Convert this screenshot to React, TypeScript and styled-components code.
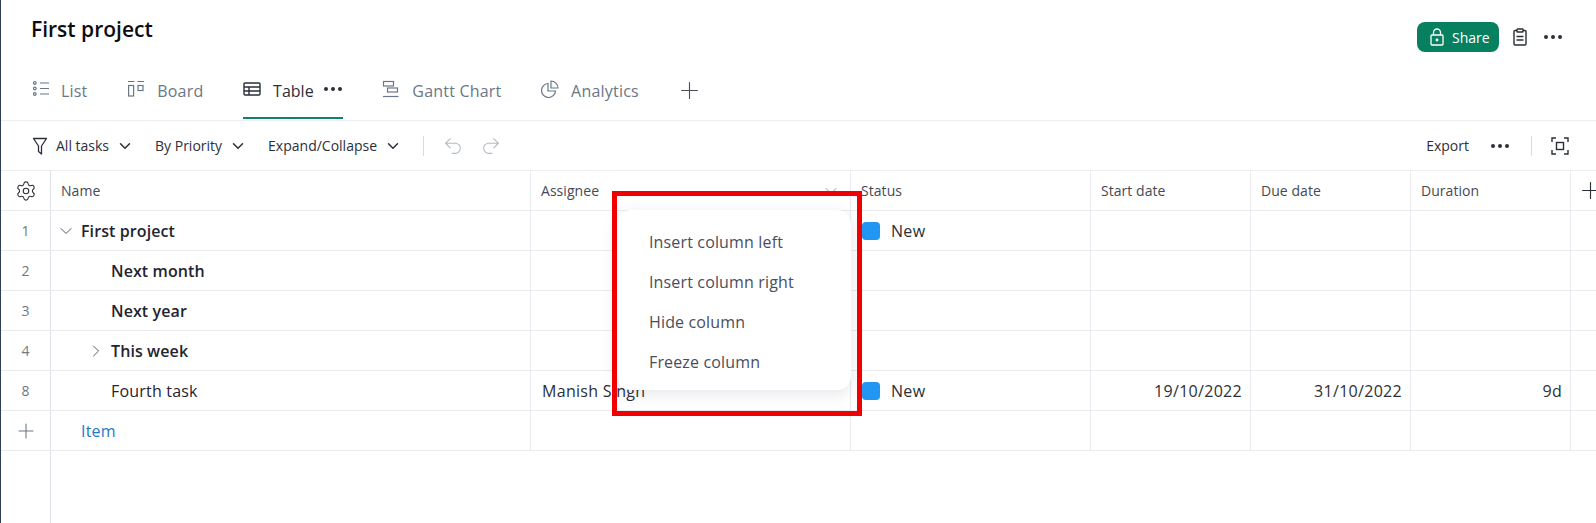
import React from 'react';
import styled, { createGlobalStyle } from 'styled-components';
import { ChevronDown, ChevronRight, Ellipsis, Plus, Redo2, Settings, Undo2 } from 'lucide-react';

const COLUMNS = '50px 480px 320px 240px 160px 160px 160px 25px';

const GlobalStyle = createGlobalStyle`
  html, body {
    margin: 0;
    padding: 0;
    background: #fff;
  }
  body {
    font-family: "Open Sans", "Noto Sans", "Liberation Sans", sans-serif;
    color: #2b2f3a;
  }
`;

const LockIcon = () => (
  <svg width="14" height="18" viewBox="0 0 14 18" fill="none" stroke="currentColor" strokeWidth="1.3">
    <rect x="1" y="7" width="12" height="10" rx="1" />
    <path d="M3.500 7V4.500a3.500 3.500 0 0 1 7 0V7" />
    <circle cx="7" cy="12" r="0.8" fill="currentColor" />
  </svg>
);

const ClipboardIcon = () => (
  <svg width="14" height="18" viewBox="0 0 14 18" fill="none" stroke="currentColor" strokeWidth="1.4">
    <path d="M4 2.500H2a1 1 0 0 0-1 1V16a1 1 0 0 0 1 1h10a1 1 0 0 0 1-1V3.500a1 1 0 0 0-1-1h-2" />
    <rect x="4" y="1" width="6" height="3" rx="0.5" />
    <path d="M3.500 8.500h7M3.500 12h7" />
  </svg>
);

const ListIcon = () => (
  <svg width="18" height="18" viewBox="0 0 18 18" fill="none" stroke="currentColor" strokeWidth="1.2">
    <circle cx="3.800" cy="3" r="1.300" />
    <circle cx="3.800" cy="8.500" r="1.300" />
    <circle cx="3.800" cy="14" r="1.300" />
    <path d="M9 3h9M9 8.500h9M9 14h9" />
  </svg>
);

const BoardIcon = () => (
  <svg width="18" height="18" viewBox="0 0 18 18" fill="none" stroke="currentColor" strokeWidth="1.2">
    <path d="M1 1.500h6.500M10.500 1.500h6.500" />
    <rect x="1.600" y="5.500" width="5" height="10.500" />
    <rect x="11" y="5.500" width="5" height="5" />
  </svg>
);

const TableIcon = () => (
  <svg width="18" height="18" viewBox="0 0 18 18" fill="none" stroke="currentColor" strokeWidth="1.4">
    <rect x="1" y="3" width="16" height="12" rx="1" />
    <path d="M1 7h16M1 11h16M6 7v8" />
  </svg>
);

const GanttIcon = () => (
  <svg width="18" height="18" viewBox="0 0 18 18" fill="none" stroke="currentColor" strokeWidth="1.2">
    <rect x="1.500" y="1.500" width="10" height="4.500" />
    <rect x="5.500" y="8" width="10" height="4" />
    <path d="M1 16.500h15.500" />
  </svg>
);

const AnalyticsIcon = () => (
  <svg width="18" height="18" viewBox="0 0 18 18" fill="none" stroke="currentColor" strokeWidth="1.2">
    <path d="M7 3.500a7 7 0 1 0 7.500 7.500H7z" />
    <path d="M10 1a7 7 0 0 1 7 7h-7z" />
  </svg>
);

const FunnelIcon = () => (
  <svg width="18" height="18" viewBox="0 0 18 18" fill="none" stroke="currentColor" strokeWidth="1.3" strokeLinejoin="round">
    <path d="M1.500 1.500h13l-5 7.500v8l-3-2.500V9z" />
  </svg>
);

const FocusIcon = () => (
  <svg width="18" height="18" viewBox="0 0 18 18" fill="none" stroke="currentColor" strokeWidth="1.4">
    <path d="M1 5V1h4M13 1h4v4M17 13v4h-4M5 17H1v-4" />
    <rect x="5.500" y="5.500" width="7" height="7" />
  </svg>
);

const rows = [
  { num: '1', name: 'First project', depth: 0, strong: true, toggle: 'down', status: true },
  { num: '2', name: 'Next month', depth: 1, strong: true },
  { num: '3', name: 'Next year', depth: 1, strong: true },
  { num: '4', name: 'This week', depth: 1, strong: true, toggle: 'right' },
  {
    num: '8',
    name: 'Fourth task',
    depth: 1,
    assignee: 'Manish Singh',
    status: true,
    start: '19/10/2022',
    due: '31/10/2022',
    duration: '9d',
  },
];

const menuItems = ['Insert column left', 'Insert column right', 'Hide column', 'Freeze column'];

export default function App() {
  return (
    <Page>
      <GlobalStyle />
      <TitleBar>
        <Title>First project</Title>
        <TitleActions>
          <ShareButton>
            <LockIcon />
            Share
          </ShareButton>
          <ClipboardIcon />
          <Ellipsis size={24} strokeWidth={2} />
        </TitleActions>
      </TitleBar>

      <Tabs>
        <Tab><ListIcon />List</Tab>
        <Tab><BoardIcon />Board</Tab>
        <Tab $active>
          <TableIcon />
          Table
          <TabMore size={24} strokeWidth={2} />
        </Tab>
        <Tab><GanttIcon />Gantt Chart</Tab>
        <Tab><AnalyticsIcon />Analytics</Tab>
        <AddTab><Plus size={27} strokeWidth={1} /></AddTab>
      </Tabs>

      <Toolbar>
        <ToolGroup $gap={21}>
          <ToolButton>
            <FunnelIcon />
            All tasks
            <ToolChevron size={18} strokeWidth={2} />
          </ToolButton>
          <ToolButton>
            By Priority
            <ToolChevron size={18} strokeWidth={2} />
          </ToolButton>
          <ToolButton>
            Expand/Collapse
            <ToolChevron size={18} strokeWidth={2} />
          </ToolButton>
          <Divider />
          <Muted>
            <Undo2 size={22} strokeWidth={1.2} />
            <Redo2 size={22} strokeWidth={1.2} />
          </Muted>
        </ToolGroup>
        <ToolGroup $gap={19}>
          <ToolButton>Export</ToolButton>
          <Ellipsis size={24} strokeWidth={2} />
          <Divider />
          <FocusIcon />
        </ToolGroup>
      </Toolbar>

      <Grid>
        <Row>
          <GutterCell><Settings size={22} strokeWidth={1.2} /></GutterCell>
          <HeaderCell>Name</HeaderCell>
          <HeaderCell>Assignee</HeaderCell>
          <HeaderCell>Status</HeaderCell>
          <HeaderCell>Start date</HeaderCell>
          <HeaderCell>Due date</HeaderCell>
          <HeaderCell>Duration</HeaderCell>
          <AddColumn><Plus size={27} strokeWidth={1} /></AddColumn>
        </Row>

        {rows.map((row) => (
          <Row key={row.num}>
            <GutterCell $muted>{row.num}</GutterCell>
            <NameCell $depth={row.depth} $strong={row.strong}>
              <Toggle>
                {row.toggle === 'down' && <ChevronDown size={20} strokeWidth={1.1} />}
                {row.toggle === 'right' && <ChevronRight size={20} strokeWidth={1.1} />}
              </Toggle>
              {row.name}
            </NameCell>
            <Cell>{row.assignee}</Cell>
            <Cell>
              {row.status && (
                <>
                  <StatusDot />
                  New
                </>
              )}
            </Cell>
            <DataCell>{row.start}</DataCell>
            <DataCell>{row.due}</DataCell>
            <DataCell>{row.duration}</DataCell>
          </Row>
        ))}

        <Row>
          <GutterCell $muted><Plus size={24} strokeWidth={1.1} /></GutterCell>
          <NameCell $depth={0} $link>
            <Toggle />
            Item
          </NameCell>
          <Cell />
          <Cell />
          <DataCell />
          <DataCell />
          <DataCell />
        </Row>
        <GutterFill />

        <HeaderCaret><ChevronDown size={20} strokeWidth={1.1} /></HeaderCaret>
        <Menu>
          {menuItems.map((item) => (
            <MenuItem key={item}>{item}</MenuItem>
          ))}
        </Menu>
        <Highlight />
      </Grid>
    </Page>
  );
}

// Styles
const Page = styled.div`
  display: flex;
  flex-direction: column;
  height: 523px;
  overflow: hidden;
  border-left: 1px solid #2e3e55;
  box-sizing: border-box;
`;

const TitleBar = styled.div`
  display: flex;
  justify-content: space-between;
  height: 70px;
  padding: 14px 31px 0 30px;
  box-sizing: border-box;
`;

const Title = styled.h1`
  margin: 0;
  font-size: 21px;
  line-height: 30px;
  font-weight: 600;
  color: #0c0d12;
`;

const TitleActions = styled.div`
  display: flex;
  align-items: center;
  gap: 14px;
  height: 30px;
  margin-top: 8px;
  color: #2b2f3a;
`;

const ShareButton = styled.div`
  display: flex;
  align-items: center;
  gap: 8px;
  width: 82px;
  height: 30px;
  padding-left: 13px;
  box-sizing: border-box;
  border-radius: 8px;
  background: #07805f;
  color: #fff;
  font-size: 14px;
`;

const Tabs = styled.div`
  display: flex;
  align-items: flex-start;
  gap: 39.7px;
  height: 51px;
  padding-left: 30px;
  box-sizing: border-box;
  border-bottom: 1px solid #eceef2;
`;

const Tab = styled.div<{ $active?: boolean }>`
  display: flex;
  align-items: center;
  gap: 12px;
  height: 49px;
  padding-bottom: 5px;
  box-sizing: border-box;
  font-size: 16px;
  letter-spacing: ${(p) => (p.$active ? '0' : '0.2px')};
  color: ${(p) => (p.$active ? '#2b2f3a' : '#6b7787')};
  border-bottom: 2px solid ${(p) => (p.$active ? '#12806a' : 'transparent')};

  svg {
    flex: none;
    margin-top: -4px;
  }
`;

const TabMore = styled(Ellipsis)`
  margin: -4px -2px 0 -5px;
`;

const AddTab = styled(Tab)`
  margin-left: -3px;
  color: #4a4e5a;

  svg {
    margin-top: -2px;
  }
`;

const Toolbar = styled.div`
  display: flex;
  justify-content: space-between;
  align-items: center;
  height: 50px;
  padding: 0 27px 0 31px;
  box-sizing: border-box;
  border-bottom: 1px solid #eceef2;
`;

const ToolGroup = styled.div<{ $gap: number }>`
  display: flex;
  align-items: center;
  gap: ${(p) => p.$gap}px;
  color: #2b2f3a;
`;

const ToolButton = styled.div`
  display: flex;
  align-items: center;
  gap: 6px;
  font-size: 14px;
`;

const ToolChevron = styled(ChevronDown)`
  margin-left: 1px;
`;

const Divider = styled.div`
  width: 1px;
  height: 20px;
  background: #d7dbe3;
`;

const Muted = styled.div`
  display: flex;
  gap: 16px;
  margin-left: -3px;
  color: #b3bbc6;
`;

const Grid = styled.div`
  position: relative;
  display: flex;
  flex-direction: column;
  flex: 1;
`;

const Row = styled.div`
  display: grid;
  grid-template-columns: ${COLUMNS};
  height: 40px;
  box-sizing: border-box;
  border-bottom: 1px solid #e9ebef;
`;

const GutterCell = styled.div<{ $muted?: boolean }>`
  display: flex;
  align-items: center;
  justify-content: center;
  font-size: 14px;
  color: ${(p) => (p.$muted ? '#6f7885' : '#2b2f3a')};
  border-right: 1px solid #dfe2e8;
`;

const Cell = styled.div`
  display: flex;
  align-items: center;
  padding: 0 8px 0 11px;
  font-size: 16px;
  letter-spacing: 0.3px;
  border-right: 1px solid #e9ebef;
`;

const HeaderCell = styled(Cell)`
  padding-left: 10px;
  font-size: 14px;
  letter-spacing: 0.05px;
  color: #454a55;
`;

const NameCell = styled(Cell)<{ $depth: number; $strong?: boolean; $link?: boolean }>`
  padding-left: ${(p) => 10 + p.$depth * 30}px;
  font-weight: ${(p) => (p.$strong ? 600 : 400)};
  letter-spacing: ${(p) => (p.$strong ? '0.1px' : '0.2px')};
  color: ${(p) => (p.$link ? '#1f7ac4' : '#1f2430')};
`;

const DataCell = styled(Cell)`
  justify-content: flex-end;
`;

const Toggle = styled.span`
  display: inline-flex;
  align-items: center;
  width: 20px;
  color: #454a55;

  svg {
    flex: none;
    margin-left: -5px;
  }
`;

const StatusDot = styled.span`
  width: 18px;
  height: 18px;
  margin-right: 11px;
  border-radius: 4px;
  background: #2196f3;
`;

const AddColumn = styled.div`
  display: flex;
  align-items: center;
  padding-left: 6px;

  svg {
    flex: none;
  }
`;

const GutterFill = styled.div`
  flex: 1;
  width: 50px;
  box-sizing: border-box;
  border-right: 1px solid #dfe2e8;
`;

const HeaderCaret = styled.div`
  position: absolute;
  left: 820px;
  top: 10px;
  color: #8a8f99;
`;

const Menu = styled.div`
  position: absolute;
  left: 616px;
  top: 39px;
  width: 234px;
  padding: 12px 0 8px;
  box-sizing: border-box;
  background: #fff;
  border-radius: 14px;
  box-shadow: 0 4px 16px rgba(40, 50, 70, 0.12);
`;

const MenuItem = styled.div`
  height: 40px;
  padding-left: 32px;
  font-size: 16px;
  line-height: 40px;
  letter-spacing: 0.15px;
  color: #4a4e5a;
`;

const Highlight = styled.div`
  position: absolute;
  left: 611px;
  top: 20px;
  width: 250px;
  height: 225px;
  box-sizing: border-box;
  border: 5px solid #f00000;
  pointer-events: none;
`;
